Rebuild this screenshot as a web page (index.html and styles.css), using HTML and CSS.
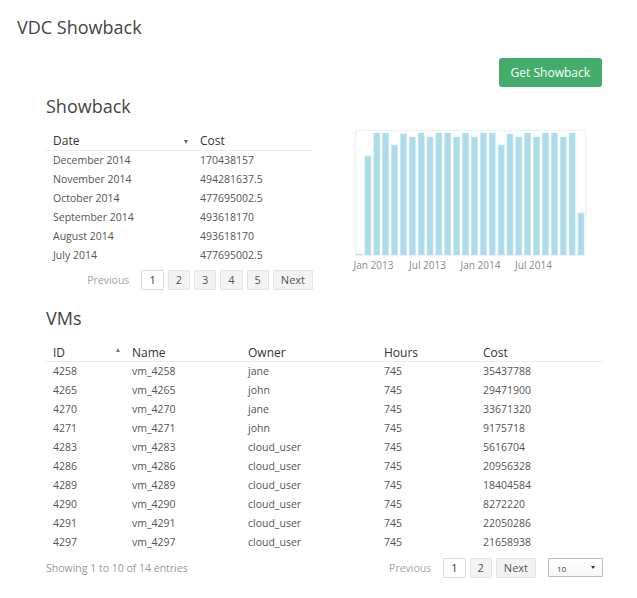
FILE: index.html
```html
<!DOCTYPE html>
<html>
<head>
<meta charset="utf-8">
<title>VDC Showback</title>
<link rel="stylesheet" href="styles.css">
</head>
<body>
<div class="page">
  <h1 class="title">VDC Showback</h1>
  <div class="toolbar"><button class="btn">Get Showback</button></div>
  <div class="content">
    <h2 class="section-title">Showback</h2>
    <div class="sb-row">
      <div class="sb-left">
        <table class="tbl">
          <colgroup><col class="c-date"><col></colgroup>
          <thead>
            <tr><th><span class="th-in">Date<i class="sort-desc"></i></span></th><th>Cost</th></tr>
          </thead>
          <tbody>
            <tr><td>December 2014</td><td>170438157</td></tr>
            <tr><td>November 2014</td><td>494281637.5</td></tr>
            <tr><td>October 2014</td><td>477695002.5</td></tr>
            <tr><td>September 2014</td><td>493618170</td></tr>
            <tr><td>August 2014</td><td>493618170</td></tr>
            <tr><td>July 2014</td><td>477695002.5</td></tr>
          </tbody>
        </table>
        <div class="pager">
          <span class="pg prev">Previous</span>
          <span class="pg active">1</span>
          <span class="pg">2</span>
          <span class="pg">3</span>
          <span class="pg">4</span>
          <span class="pg">5</span>
          <span class="pg">Next</span>
        </div>
      </div>
      <svg class="chart" width="240" height="145" viewBox="0 0 240 145">
        <rect x="5.5" y="0.5" width="230" height="124.5" fill="none" stroke="#efefef"/>
        <g stroke="#f3f3f3">
          <line x1="77.5" y1="0" x2="77.5" y2="125"/>
          <line x1="130.5" y1="0" x2="130.5" y2="125"/>
          <line x1="183.5" y1="0" x2="183.5" y2="125"/>
        </g>
        <g fill="#acdcea" stroke="#c4e6f1" stroke-width="0.6">
          <rect x="6.0" y="124" width="6" height="1"/>
          <rect x="14.9" y="26" width="6" height="99"/>
          <rect x="23.8" y="3" width="6" height="122"/>
          <rect x="32.6" y="3" width="6" height="122"/>
          <rect x="41.5" y="15" width="6" height="110"/>
          <rect x="50.4" y="4" width="6" height="121"/>
          <rect x="59.3" y="7" width="6" height="118"/>
          <rect x="68.2" y="3" width="6" height="122"/>
          <rect x="77.0" y="7" width="6" height="118"/>
          <rect x="85.9" y="3" width="6" height="122"/>
          <rect x="94.8" y="3" width="6" height="122"/>
          <rect x="103.7" y="7" width="6" height="118"/>
          <rect x="112.6" y="3" width="6" height="122"/>
          <rect x="121.4" y="7" width="6" height="118"/>
          <rect x="130.3" y="3" width="6" height="122"/>
          <rect x="139.2" y="3" width="6" height="122"/>
          <rect x="148.1" y="15" width="6" height="110"/>
          <rect x="157.0" y="4" width="6" height="121"/>
          <rect x="165.8" y="7" width="6" height="118"/>
          <rect x="174.7" y="3" width="6" height="122"/>
          <rect x="183.6" y="7" width="6" height="118"/>
          <rect x="192.5" y="3" width="6" height="122"/>
          <rect x="201.4" y="3" width="6" height="122"/>
          <rect x="210.2" y="7" width="6" height="118"/>
          <rect x="219.1" y="3" width="6" height="122"/>
          <rect x="228.0" y="83" width="6" height="42"/>
        </g>
        <g class="axis" text-anchor="middle">
          <text x="23.5" y="139">Jan 2013</text>
          <text x="77.5" y="139">Jul 2013</text>
          <text x="130.5" y="139">Jan 2014</text>
          <text x="183.5" y="139">Jul 2014</text>
        </g>
      </svg>
    </div>

    <h2 class="section-title vms-title">VMs</h2>
    <table class="tbl vms">
      <colgroup><col class="c-id"><col class="c-name"><col class="c-owner"><col class="c-hours"><col></colgroup>
      <thead>
        <tr><th class="th-id"><span class="th-in">ID<i class="sort-asc"></i></span></th><th>Name</th><th>Owner</th><th>Hours</th><th>Cost</th></tr>
      </thead>
      <tbody>
        <tr><td>4258</td><td>vm_4258</td><td>jane</td><td>745</td><td>35437788</td></tr>
        <tr><td>4265</td><td>vm_4265</td><td>john</td><td>745</td><td>29471900</td></tr>
        <tr><td>4270</td><td>vm_4270</td><td>jane</td><td>745</td><td>33671320</td></tr>
        <tr><td>4271</td><td>vm_4271</td><td>john</td><td>745</td><td>9175718</td></tr>
        <tr><td>4283</td><td>vm_4283</td><td>cloud_user</td><td>745</td><td>5616704</td></tr>
        <tr><td>4286</td><td>vm_4286</td><td>cloud_user</td><td>745</td><td>20956328</td></tr>
        <tr><td>4289</td><td>vm_4289</td><td>cloud_user</td><td>745</td><td>18404584</td></tr>
        <tr><td>4290</td><td>vm_4290</td><td>cloud_user</td><td>745</td><td>8272220</td></tr>
        <tr><td>4291</td><td>vm_4291</td><td>cloud_user</td><td>745</td><td>22050286</td></tr>
        <tr><td>4297</td><td>vm_4297</td><td>cloud_user</td><td>745</td><td>21658938</td></tr>
      </tbody>
    </table>
    <div class="footer">
      <div class="info">Showing 1 to 10 of 14 entries</div>
      <div class="footer-right">
        <div class="pager pager-inline">
          <span class="pg prev">Previous</span>
          <span class="pg active">1</span>
          <span class="pg">2</span>
          <span class="pg">Next</span>
        </div>
        <div class="select"><span class="sel-val">10</span><i class="caret"></i></div>
      </div>
    </div>
  </div>
</div>
</body>
</html>
```
FILE: styles.css
```css
* { box-sizing: border-box; }
body {
  margin: 0;
  font-family: "Open Sans", "Noto Sans", sans-serif;
  color: #555;
  background: #fff;
}
.page { padding: 15px 34px 0 17px; }
.title {
  margin: 0;
  font-size: 18px;
  line-height: 24px;
  font-weight: 400;
  color: #444;
}
.toolbar {
  display: flex;
  justify-content: flex-end;
  margin-top: 19px;
}
.btn {
  height: 29px;
  padding: 0 12px;
  margin-right: 1px;
  border: none;
  border-radius: 3px;
  background: #45ad6b;
  color: #fff;
  font-family: "Open Sans", sans-serif;
  font-size: 12px;
}
.content { margin-left: 29px; }
.section-title {
  margin: 7px 0 13px;
  font-size: 18px;
  line-height: 24px;
  font-weight: 400;
  color: #444;
}
.vms-title { margin: 16px 0 13px; }
.sb-row {
  display: flex;
  align-items: flex-start;
}
.sb-left { width: 267px; }
.chart { margin: -1px 0 0 37px; display: block; }
.axis { font-family: "Open Sans", sans-serif; font-size: 10px; fill: #8a8a8a; }

.tbl {
  width: 100%;
  border-collapse: collapse;
  table-layout: fixed;
}
.c-date { width: 147px; }
.c-id { width: 79px; }
.c-name { width: 116px; }
.c-owner { width: 136px; }
.c-hours { width: 99px; }
.tbl th {
  height: 19px;
  padding: 1px 7px 0;
  font-size: 12px;
  line-height: 17px;
  font-weight: 400;
  color: #333;
  text-align: left;
  vertical-align: top;
  border-bottom: 1px solid #ececec;
}
.tbl th:first-child { padding-right: 5px; }
.tbl td {
  height: 19px;
  padding: 0 7px;
  font-size: 10.5px;
  line-height: 19px;
  color: #555;
  white-space: nowrap;
}
.th-in {
  display: flex;
  justify-content: space-between;
  align-items: center;
}
.sort-desc, .sort-asc {
  display: block;
  width: 0;
  height: 0;
  border-left: 2.5px solid transparent;
  border-right: 2.5px solid transparent;
  margin-top: 3px;
}
.sort-desc { border-top: 4px solid #666; }
.sort-asc { border-bottom: 4px solid #777; margin-top: -4px; }

.pager {
  display: flex;
  justify-content: flex-end;
  gap: 4px;
  margin-top: 5px;
}
.pg {
  height: 20px;
  padding: 0 7px;
  border: 1px solid #e4e4e4;
  border-radius: 1px;
  background: #f3f3f3;
  font-size: 11px;
  line-height: 18px;
  color: #555;
}
.pg.active { background: #fff; border-color: #dcdcdc; color: #333; }
.pg.prev { border-color: transparent; background: none; color: #a5a5a5; font-size: 10.5px; }

.footer {
  display: flex;
  justify-content: space-between;
  align-items: flex-start;
  margin-top: 6px;
}
.info { font-size: 10.5px; line-height: 20px; color: #999; }
.footer-right { display: flex; align-items: flex-start; }
.pager-inline { margin-top: 0; }
.select {
  width: 55px;
  height: 19px;
  margin-left: 12px;
  border: 1px solid #bbb;
  border-radius: 1px;
  background: linear-gradient(#fff, #f6f6f6);
  display: flex;
  justify-content: space-between;
  align-items: center;
  padding: 2px 7px 0 8px;
}
.sel-val { font-size: 8px; color: #444; line-height: 10px; }
.caret {
  display: block;
  width: 0;
  height: 0;
  border-left: 2px solid transparent;
  border-right: 2px solid transparent;
  border-top: 3px solid #333;
  margin-top: -2px;
}
```
